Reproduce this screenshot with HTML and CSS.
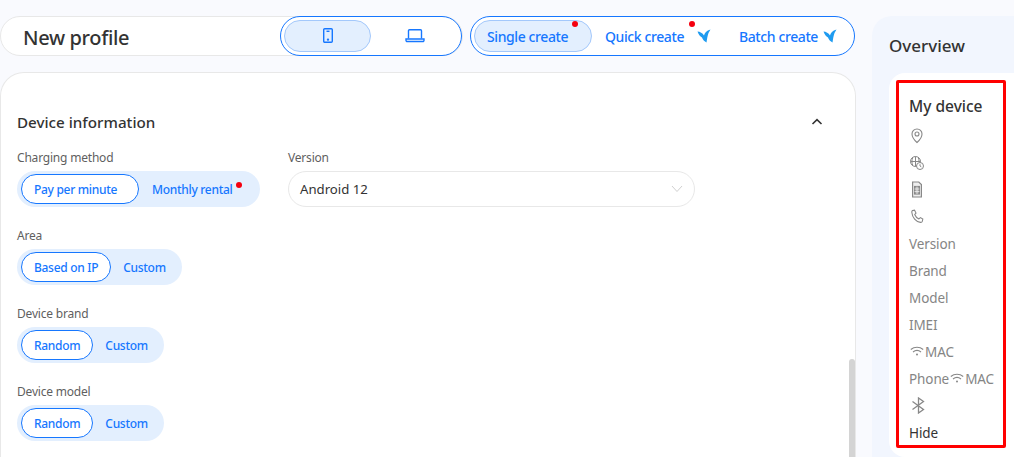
FILE: index.html
```html
<!doctype html>
<html>
  <head>
    <meta name="viewport" content="width=device-width, initial-scale=1">
    <link rel="stylesheet" href="styles.css">
    <title>New profile</title>
  </head>
  <body>
    <div class="page">
      <div class="left">
        <div class="topbar">
          <h1 class="title">New profile</h1>
          <div class="switch switch-device">
            <div class="tab tab-phone active">
              <svg width="14" height="18" viewBox="0 0 14 18" fill="none" stroke="#1677ff" stroke-width="1.4"><rect x="2.7" y="1.7" width="8.6" height="13.6" rx="1"/><path d="M5.5 4.3h3"/><circle cx="7" cy="12.6" r=".5" fill="#1677ff"/></svg>
            </div>
            <div class="tab tab-laptop">
              <svg width="20" height="16" viewBox="0 0 20 16" fill="none" stroke="#1677ff" stroke-width="1.4"><path d="M3.5 10.5V2.8a1 1 0 0 1 1-1h11a1 1 0 0 1 1 1v7.7"/><path d="M1 11h18v1.3a1.2 1.2 0 0 1-1.2 1.2H2.2A1.2 1.2 0 0 1 1 12.3z"/></svg>
            </div>
          </div>
          <div class="switch switch-create">
            <div class="tab tab-single active">Single create<span class="dot dot-single"></span></div>
            <div class="tab tab-quick">Quick create<span class="dot dot-quick"></span>
              <svg class="bird" width="14" height="14" viewBox="0 0 14 14"><path fill="#1e9bf0" d="M.5 2.500C3 2.700 5.500 4 7 6.500 7.500 4 9.500 1.600 13.500.5l-2 3.500C10.500 7 10 10 9.500 13.500 7.500 12.500 5.700 10.500 5 8.500 3 7.500 1.500 5.500.5 2.500z"/></svg>
            </div>
            <div class="tab tab-batch">Batch create
              <svg class="bird" width="14" height="14" viewBox="0 0 14 14"><path fill="#1e9bf0" d="M.5 2.500C3 2.700 5.500 4 7 6.500 7.500 4 9.500 1.600 13.500.5l-2 3.500C10.500 7 10 10 9.500 13.500 7.500 12.500 5.700 10.500 5 8.500 3 7.500 1.500 5.500.5 2.500z"/></svg>
            </div>
          </div>
        </div>

        <div class="card">
          <div class="card-head">
            <h2 class="section-title">Device information</h2>
            <svg width="12" height="8" viewBox="0 0 12 8" fill="none" stroke="#333" stroke-width="1.6"><path d="M1.500 6 6 1.700 10.500 6"/></svg>
          </div>

          <div class="row">
            <div class="field field-charge">
              <div class="label">Charging method</div>
              <div class="pills">
                <div class="pill on pill-minute">Pay per minute</div>
                <div class="pill pill-rental">Monthly rental<span class="dot dot-rental"></span></div>
              </div>
            </div>
            <div class="field">
              <div class="label">Version</div>
              <div class="select">
                <span>Android 12</span>
                <svg width="12" height="8" viewBox="0 0 12 8" fill="none" stroke="#d0d0d0" stroke-width="1"><path d="M1 1l5 5.500L11 1"/></svg>
              </div>
            </div>
          </div>

          <div class="field">
            <div class="label">Area</div>
            <div class="pills">
              <div class="pill on">Based on IP</div>
              <div class="pill">Custom</div>
            </div>
          </div>

          <div class="field">
            <div class="label">Device brand</div>
            <div class="pills">
              <div class="pill on">Random</div>
              <div class="pill">Custom</div>
            </div>
          </div>

          <div class="field">
            <div class="label">Device model</div>
            <div class="pills">
              <div class="pill on">Random</div>
              <div class="pill">Custom</div>
            </div>
          </div>

          <div class="scrollbar"></div>
        </div>
      </div>

      <div class="panel">
        <h2 class="panel-title">Overview</h2>
        <div class="panel-card">
          <div class="marked">
            <div class="mine">My device</div>
            <div class="spec">
              <svg width="16" height="17" viewBox="0 0 16 17" fill="none" stroke="#888" stroke-width="1.100"><path d="M8 15.500C5 12.800 3 10 3 7a5 5 0 0 1 10 0c0 3-2 5.800-5 8.500z"/><circle cx="8" cy="7" r="2"/></svg>
            </div>
            <div class="spec">
              <svg width="16" height="16" viewBox="0 0 16 16" fill="none" stroke="#888" stroke-width="1"><circle cx="6.500" cy="6.500" r="5"/><path d="M1.500 6.500h10M6.500 1.500v10M3.800 2.500c-1.200 2.600-1.200 5.400 0 8M9.200 2.500c.6 1.300.8 2.500.8 3.500"/><circle cx="11" cy="11" r="3.500" fill="#fff"/><path d="M11 9.200V11l1.300.8"/></svg>
            </div>
            <div class="spec">
              <svg width="16" height="17" viewBox="0 0 16 17" fill="none" stroke="#888" stroke-width="1.200"><path d="M3.600 1h6.200l2.600 2.600V16H3.600z" fill="#eee"/><rect x="5.600" y="5.500" width="4.800" height="7.500" fill="#aaa"/><path d="M5.600 8h4.800M5.600 10.500h4.800M8 5.500V13" stroke="#eee" stroke-width=".8"/></svg>
            </div>
            <div class="spec">
              <svg width="16" height="15" viewBox="0 0 16 15" fill="none" stroke="#888" stroke-width="1.100"><path d="M3.500 1.500l2-.4 1.500 3-1.300 1.400c.8 2 2.200 3.500 4.200 4.400l1.500-1.300 2.400 1.400-.5 2.400c-.3.800-1 1.100-1.800 1C7 12.800 3.200 8.500 2.800 3.300c-.1-.8.100-1.400.7-1.800z"/></svg>
            </div>
            <div class="spec">Version</div>
            <div class="spec">Brand</div>
            <div class="spec">Model</div>
            <div class="spec">IMEI</div>
            <div class="spec">
              <svg class="wifi" width="15" height="11" viewBox="0 0 15 11" fill="none" stroke="#888" stroke-width="1.100"><path d="M1.800 3.500c3.600-3 8.800-3 12.400 0M4 6c2.400-1.900 5.600-1.900 8 0"/><circle cx="8" cy="8.500" r="1" fill="#888" stroke="none"/></svg>MAC
            </div>
            <div class="spec">
              Phone<svg class="wifi" width="15" height="11" viewBox="0 0 15 11" fill="none" stroke="#888" stroke-width="1.100"><path d="M1.800 3.500c3.600-3 8.800-3 12.400 0M4 6c2.400-1.900 5.600-1.900 8 0"/><circle cx="8" cy="8.500" r="1" fill="#888" stroke="none"/></svg>MAC
            </div>
            <div class="spec">
              <svg width="18" height="17" viewBox="0 0 18 17" fill="none" stroke="#888" stroke-width="1.300"><path d="M3.500 4.500l11 8L9.500 16V1l5 3.500-11 8"/></svg>
            </div>
            <div class="spec hide">Hide</div>
          </div>
        </div>
      </div>
    </div>
  </body>
</html>
```

FILE: styles.css
```css
* {
  box-sizing: border-box;
}

html, body {
  margin: 0;
  height: 457px;
  overflow: hidden;
}

body {
  background: #f9fafe;
  font-family: "Noto Sans", "Open Sans", sans-serif;
  color: #333;
}

.page {
  display: flex;
  gap: 16px;
  padding-top: 16px;
  width: 1014px;
  height: 457px;
}

.left {
  width: 856px;
  flex: none;
  display: flex;
  flex-direction: column;
  gap: 16px;
}

/* top bar */
.topbar {
  display: flex;
  height: 40px;
  gap: 8px;
}

.title {
  flex: none;
  margin: 0 -191px 0 0;
  width: 463px;
  height: 40px;
  padding-left: 22px;
  background: #fff;
  border: 1px solid #e8e8e8;
  border-radius: 20px;
  font-size: 20px;
  font-weight: 500;
  letter-spacing: -0.35px;
  line-height: 42px;
  color: #333;
}

.switch {
  flex: none;
  display: flex;
  align-items: center;
  height: 40px;
  padding: 3px;
  background: #fff;
  border: 1px solid #1677ff;
  border-radius: 20px;
}

.switch-device {
  width: 182px;
}

.switch-create {
  width: 385px;
}

.tab {
  position: relative;
  display: flex;
  align-items: center;
  height: 32px;
  border-radius: 16px;
  font-size: 14px;
  font-weight: 500;
  letter-spacing: -0.4px;
  color: #1677ff;
  white-space: nowrap;
}

.tab.active {
  background: #e3effe;
  border: 1px solid #a3c8fb;
}

.tab-phone {
  width: 87px;
  padding-left: 2px;
  justify-content: center;
}

.tab-laptop {
  width: 88px;
  padding-left: 2px;
  justify-content: center;
}

.tab-single {
  width: 118px;
  padding-left: 12px;
}

.tab-quick {
  width: 134px;
  padding-left: 13px;
}

.tab-quick .bird {
  margin-left: 13px;
}

.tab-batch {
  width: 120px;
  padding-left: 13px;
}

.tab-batch .bird {
  margin-left: 5px;
}

.bird {
  flex: none;
}

.dot {
  position: absolute;
  width: 6px;
  height: 6px;
  border-radius: 50%;
  background: #f5000f;
}

.dot-single {
  top: 0;
  right: 13px;
}

.dot-quick {
  top: 1px;
  right: 31px;
}

.dot-rental {
  top: 7px;
  right: 13px;
}

/* main card */
.card {
  position: relative;
  flex: 1;
  background: #fff;
  border: 1px solid #e8e8e8;
  border-bottom: none;
  border-radius: 24px 24px 0 0;
  padding: 38px 16px 0;
  display: flex;
  flex-direction: column;
  gap: 19px;
}

.card-head {
  display: flex;
  align-items: center;
  justify-content: space-between;
  height: 22px;
  padding-right: 16px;
  margin-bottom: -4px;
}

.section-title {
  margin: 0;
  font-size: 15.2px;
  font-weight: 500;
  color: #333;
}

.row {
  display: flex;
  gap: 28px;
}

.field-charge {
  width: 243px;
}

.label {
  height: 20px;
  margin-bottom: 3px;
  font-size: 12px;
  letter-spacing: -0.2px;
  line-height: 20px;
  color: #5f5f5f;
}

.pills {
  display: inline-flex;
  align-items: center;
  height: 36px;
  padding: 0 4px;
  background: #e3effe;
  border-radius: 18px;
}

.pill {
  position: relative;
  height: 30px;
  padding: 0 11px;
  border: 1px solid transparent;
  border-radius: 15px;
  font-size: 12px;
  font-weight: 500;
  letter-spacing: -0.3px;
  line-height: 30px;
  color: #1677ff;
  white-space: nowrap;
}

.pill.on {
  padding: 0 12px;
  background: #fff;
  border-color: #1677ff;
}

.pill-minute {
  width: 118px;
}

.pill-rental {
  width: 117px;
  padding: 0 12px;
}

.select {
  display: flex;
  align-items: center;
  justify-content: space-between;
  width: 407px;
  height: 36px;
  padding: 0 11px;
  background: #fff;
  border: 1px solid #e8e8e8;
  border-radius: 18px;
  font-size: 13.2px;
  color: #333;
}

.scrollbar {
  position: absolute;
  right: 0;
  top: 286px;
  bottom: 0;
  width: 6px;
  border-radius: 3px 3px 0 0;
  background: #d4d4d4;
}

/* overview */
.panel {
  flex: 1;
  background: #f2f6fe;
  border-radius: 20px 0 0 0;
  padding: 18px 0 0 17px;
}

.panel-title {
  margin: 0 0 15px;
  font-size: 17px;
  font-weight: 500;
  line-height: 24px;
  color: #333;
}

.panel-card {
  height: 384px;
  padding: 7px 0 0 7px;
  background: #fff;
  border-radius: 16px 0 0 16px;
}

.marked {
  height: 368px;
  width: 110px;
  padding: 12px 0 0 10px;
  border: 3px solid #f00;
  border-radius: 2px;
}

.mine {
  margin-bottom: 5px;
  font-size: 15.5px;
  font-weight: 500;
  line-height: 22px;
  color: #333;
}

.spec {
  display: flex;
  align-items: center;
  height: 27px;
  font-size: 13.5px;
  letter-spacing: -0.1px;
  color: #858585;
  white-space: nowrap;
}

.wifi {
  flex: none;
  margin-right: 1px;
}

.hide {
  color: #333;
}
```
